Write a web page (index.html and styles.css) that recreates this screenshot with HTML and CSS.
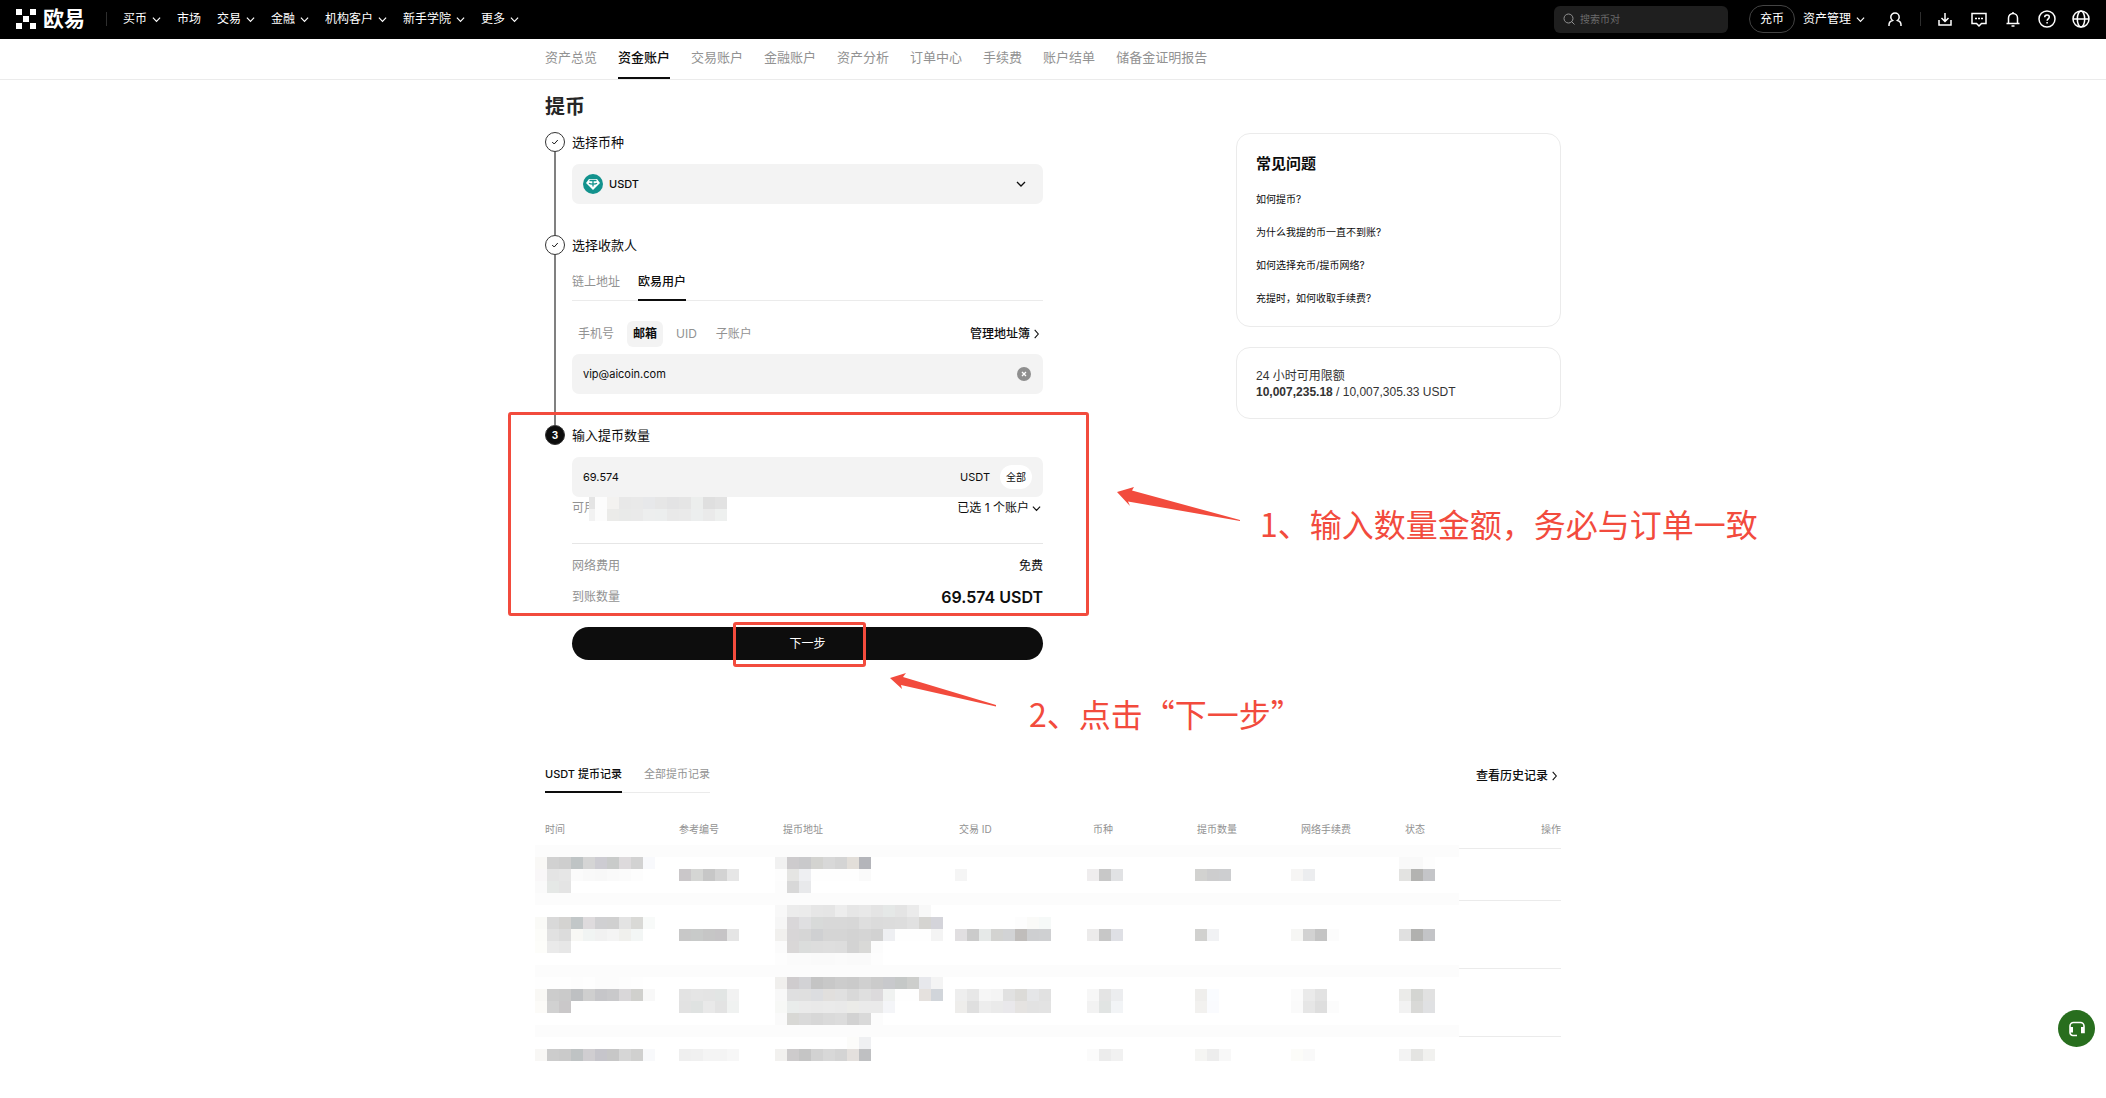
FILE: index.html
```html
<!DOCTYPE html>
<html lang="zh-CN">
<head>
<meta charset="UTF-8">
<meta name="viewport" content="width=device-width, initial-scale=1.0">
<title>提币</title>
<link rel="stylesheet" href="styles.css">
</head>
<body>

<!-- Shared icons -->
<svg class="sprite" aria-hidden="true">
  <symbol id="chevron-down" viewBox="0 0 10 10"><path d="M1 3l4 4 4-4" fill="none" stroke="currentColor" stroke-width="1.3"/></symbol>
  <symbol id="chevron-right" viewBox="0 0 10 10"><path d="M3 0.500l4 4.500-4 4.500" fill="none" stroke="currentColor" stroke-width="1.2"/></symbol>
  <symbol id="check" viewBox="0 0 10 10"><path d="M1.500 5l2.500 2.500 4.500-5" fill="none" stroke="currentColor" stroke-width="1.200"/></symbol>
</svg>

<header class="topbar">
  <a class="logo" href="#">
    <svg width="20" height="20" viewBox="0 0 20 20" fill="#fff"><path d="M0 0h6v6H0zM14 0h6v6h-6zM7 7h6v6H7zM0 14h6v6H0zM14 14h6v6h-6z"/></svg>
    <span>欧易</span>
  </a>
  <span class="divider"></span>
  <nav class="topnav">
    <button type="button">买币<svg><use href="#chevron-down"/></svg></button>
    <a href="#">市场</a>
    <button type="button">交易<svg><use href="#chevron-down"/></svg></button>
    <button type="button">金融<svg><use href="#chevron-down"/></svg></button>
    <button type="button">机构客户<svg><use href="#chevron-down"/></svg></button>
    <button type="button">新手学院<svg><use href="#chevron-down"/></svg></button>
    <button type="button">更多<svg><use href="#chevron-down"/></svg></button>
  </nav>
  <label class="search">
    <svg width="12" height="12" viewBox="0 0 12 12" fill="none" stroke="#929292"><circle cx="5.500" cy="5.500" r="4.500"/><path d="M8.500 8.500l3 3"/></svg>
    <input type="search" placeholder="搜索币对" aria-label="搜索币对">
  </label>
  <a class="deposit" href="#">充币</a>
  <button type="button" class="assets">资产管理<svg><use href="#chevron-down"/></svg></button>
  <button type="button" class="icon-btn user" aria-label="用户">
    <svg viewBox="0 0 18 18"><path d="M3 16v-1c0-2.500 1.500-4 3.500-4.500C5.300 9.600 4.800 8.500 4.800 7.200 4.800 4.900 6.600 3 9 3s4.200 1.900 4.200 4.200c0 1.300-.5 2.400-1.700 3.300 2 .5 3.500 2 3.500 4.500v1"/></svg>
  </button>
  <span class="divider"></span>
  <div class="icons">
    <button type="button" class="icon-btn" aria-label="下载">
      <svg viewBox="0 0 18 18"><path d="M3 10v5h12v-5M9 3v8M5.500 8L9 11.500 12.500 8"/></svg>
    </button>
    <button type="button" class="icon-btn" aria-label="消息">
      <svg viewBox="0 0 18 18"><path d="M2 3.500h14v10h-4.500L9 16l-2.500-2.500H2zM5 8.500h2M8 8.500h2M11 8.500h2"/></svg>
    </button>
    <button type="button" class="icon-btn" aria-label="通知">
      <svg viewBox="0 0 18 18"><path d="M2.500 13.500h13M4.500 13V8a4.500 4.500 0 0 1 9 0v5M9 3.500V2M7.500 16h3"/></svg>
    </button>
    <button type="button" class="icon-btn" aria-label="帮助">
      <svg viewBox="0 0 18 18"><circle cx="9" cy="9" r="8"/><path d="M6.700 7.300c0-1.500 1-2.300 2.300-2.300s2.300.9 2.300 2.100c0 1.700-2.200 1.800-2.200 3.600M9.100 12v1.500"/></svg>
    </button>
    <button type="button" class="icon-btn" aria-label="语言">
      <svg viewBox="0 0 18 18"><circle cx="9" cy="9" r="8"/><ellipse cx="9" cy="9" rx="3.700" ry="8"/><path d="M1 9h16"/></svg>
    </button>
  </div>
</header>

<nav class="subnav">
  <div class="container">
    <a href="#">资产总览</a>
    <a href="#" class="active">资金账户</a>
    <a href="#">交易账户</a>
    <a href="#">金融账户</a>
    <a href="#">资产分析</a>
    <a href="#">订单中心</a>
    <a href="#">手续费</a>
    <a href="#">账户结单</a>
    <a href="#">储备金证明报告</a>
  </div>
</nav>

<main class="container page">
  <h1>提币</h1>

  <div class="columns">
    <form class="steps">
      <section class="step">
        <h2><span class="dot"><svg><use href="#check"/></svg></span><label for="coin">选择币种</label></h2>
        <div class="field coin">
          <svg width="20" height="20" viewBox="0 0 20 20"><circle cx="10" cy="10" r="10" fill="#12928d"/><path d="M6 5h8l3 4-7 7-7-7z" fill="#fff"/><path d="M6.500 6.500h7M10 6.500v6M6 9.200c1.500 1.200 6.500 1.200 8 0" fill="none" stroke="#12928d" stroke-width="1.300"/></svg>
          <select id="coin"><option>USDT</option></select>
          <svg class="arrow"><use href="#chevron-down"/></svg>
        </div>
      </section>

      <section class="step">
        <h2><span class="dot"><svg><use href="#check"/></svg></span><label for="recipient">选择收款人</label></h2>
        <div class="tabs">
          <button type="button">链上地址</button>
          <button type="button" class="active">欧易用户</button>
        </div>
        <div class="methods">
          <button type="button">手机号</button>
          <button type="button" class="active">邮箱</button>
          <button type="button">UID</button>
          <button type="button">子账户</button>
          <a class="more" href="#">管理地址簿<svg><use href="#chevron-right"/></svg></a>
        </div>
        <div class="field">
          <input type="text" id="recipient" value="vip@aicoin.com">
          <button type="button" class="clear" aria-label="清除">
            <svg width="14" height="14" viewBox="0 0 14 14"><circle cx="7" cy="7" r="7" fill="#8f8f8f"/><path d="M5 5l4 4M9 5l-4 4" stroke="#fff" stroke-width="1.300"/></svg>
          </button>
        </div>
      </section>

      <section class="step">
        <h2><span class="dot current">3</span><label for="amount">输入提币数量</label></h2>
        <div class="field amount">
          <input type="text" id="amount" value="69.574">
          <span>USDT</span>
          <button type="button" class="all">全部</button>
        </div>
        <div class="available">
          <span class="muted">可用</span>
          <svg id="balanceMosaic" class="balance" viewBox="6 0 138 24"></svg>
          <button type="button">已选 1 个账户<svg><use href="#chevron-down"/></svg></button>
        </div>
        <dl class="summary">
          <div><dt>网络费用</dt><dd>免费</dd></div>
          <div><dt>到账数量</dt><dd class="total">69.574 USDT</dd></div>
        </dl>
        <button type="button" class="next">下一步</button>
      </section>
    </form>

    <aside>
      <section class="card faq">
        <h2>常见问题</h2>
        <ul>
          <li><a href="#">如何提币?</a></li>
          <li><a href="#">为什么我提的币一直不到账?</a></li>
          <li><a href="#">如何选择充币/提币网络?</a></li>
          <li><a href="#">充提时，如何收取手续费?</a></li>
        </ul>
      </section>
      <section class="card limit">
        <p>24 小时可用限额</p>
        <p><strong>10,007,235.18</strong> / 10,007,305.33 USDT</p>
      </section>
    </aside>
  </div>

  <section class="records">
    <div class="records-head">
      <div class="tabs">
        <button type="button" class="active">USDT 提币记录</button>
        <button type="button">全部提币记录</button>
      </div>
      <a class="more" href="#">查看历史记录<svg><use href="#chevron-right"/></svg></a>
    </div>
    <div class="table-wrap">
      <table>
        <thead>
          <tr>
            <th class="w-time">时间</th>
            <th class="w-small">参考编号</th>
            <th class="w-address">提币地址</th>
            <th class="w-time">交易 ID</th>
            <th class="w-small">币种</th>
            <th class="w-small">提币数量</th>
            <th class="w-small">网络手续费</th>
            <th class="w-small">状态</th>
            <th>操作</th>
          </tr>
        </thead>
        <tbody>
          <tr class="short"><td></td><td></td><td></td><td></td><td></td><td></td><td></td><td></td><td></td></tr>
          <tr><td></td><td></td><td></td><td></td><td></td><td></td><td></td><td></td><td></td></tr>
          <tr><td></td><td></td><td></td><td></td><td></td><td></td><td></td><td></td><td></td></tr>
          <tr class="short last"><td></td><td></td><td></td><td></td><td></td><td></td><td></td><td></td><td></td></tr>
        </tbody>
      </table>
      <svg id="recordsMosaic" class="mosaic" viewBox="0 0 924 216"></svg>
    </div>
  </section>

  <!-- Guide marks over the form -->
  <div class="mark mark-amount"></div>
  <div class="mark mark-next"></div>
  <svg class="pointer pointer-amount" width="124" height="34" viewBox="0 0 124 34"><path d="M0 5L17 0l-2 3.500L123 33v1L11 14.500l2 4.500z"/></svg>
  <svg class="pointer pointer-next" width="108" height="34" viewBox="0 0 108 34"><path d="M0 5L16 0l-3 4L106 32v1.500L11 12l1 4z"/></svg>
  <p class="note note-amount">1、输入数量金额，务必与订单一致</p>
  <p class="note note-next">2、点击“下一步”</p>
</main>

<button type="button" class="support" aria-label="在线客服">
  <svg width="18" height="18" viewBox="0 0 18 18" fill="none" stroke="#fff" stroke-width="1.600"><path d="M9 15.500H5a3 3 0 0 1-3-3V6a3.500 3.500 0 0 1 3.500-3.500h7A3.500 3.500 0 0 1 16 6v6.500h-3"/><path d="M3.500 7v5.500M14.500 7v5.500" stroke-width="3"/></svg>
</button>

<script src="script.js"></script>
</body>
</html>
```
FILE: styles.css
```css
* {
  box-sizing: border-box;
}
body {
  font-family: Inter, "Noto Sans CJK SC", sans-serif;
  font-size: 12px;
  line-height: 20px;
  margin: 0;
  background-color: #fff;
  color: #0d0d0d;
}
h1, h2, p, ul, dl, dd {
  margin: 0;
  padding: 0;
}
a {
  color: inherit;
  text-decoration: none;
}
button, input, select {
  font: inherit;
  color: inherit;
  background: none;
  border: none;
  padding: 0;
  margin: 0;
}
button {
  cursor: pointer;
  white-space: nowrap;
}
input, select {
  outline: none;
  min-width: 0;
}
svg {
  display: block;
  flex: none;
}
.sprite {
  display: none;
}
.container {
  max-width: 1016px;
  margin: 0 auto;
}

/* Top bar */
.topbar {
  display: flex;
  align-items: center;
  height: 39px;
  padding: 0 16px 1px;
  background: #000;
  color: #fff;
}
.logo {
  display: flex;
  align-items: center;
  gap: 7px;
  font-size: 21px;
  font-weight: bold;
}
.divider {
  width: 1px;
  height: 14px;
  background: #2e2e2e;
}
.logo + .divider {
  margin: 0 16px 0 21px;
}
.topnav {
  display: flex;
  gap: 16px;
  margin-right: auto;
}
.topnav button, .assets {
  display: flex;
  align-items: center;
  gap: 5px;
}
.topnav svg, .assets svg {
  width: 9px;
  height: 9px;
}
.search {
  display: flex;
  align-items: center;
  gap: 5px;
  width: 174px;
  height: 27px;
  padding: 0 9px;
  background: #1f1f1f;
  border-radius: 6px;
  font-size: 10px;
}
.search input {
  flex: 1;
}
.search input::placeholder {
  color: #6b6b6b;
}
.deposit {
  margin: 0 8px 0 21px;
  padding: 3px 10px;
  border: 1px solid #444;
  border-radius: 14px;
}
.icon-btn svg {
  width: 18px;
  height: 18px;
  fill: none;
  stroke: #fff;
  stroke-width: 1.5;
}
.user {
  margin: 0 16px 0 21px;
}
.icons {
  display: flex;
  gap: 16px;
  margin-left: 15px;
}

/* Account tabs */
.subnav {
  border-bottom: 1px solid #ebebeb;
  font-size: 13px;
  color: #929292;
}
.subnav .container {
  display: flex;
  gap: 21px;
}
.subnav a {
  height: 40px;
  line-height: 36px;
}
.subnav a.active {
  color: #0d0d0d;
  font-weight: 500;
  border-bottom: 2px solid #0d0d0d;
}

/* Page */
.page {
  position: relative;
  padding-top: 15px;
}
h1 {
  font-size: 20px;
  line-height: 24px;
  color: #262626;
}
.columns {
  display: flex;
  justify-content: space-between;
  align-items: flex-start;
  margin-top: 13px;
}
.steps {
  width: 498px;
}
.step {
  position: relative;
  padding: 0 0 31px 27px;
}
.step:last-child {
  padding-bottom: 0;
}
.step:not(:last-child)::before {
  content: "";
  position: absolute;
  left: 9px;
  top: 20px;
  bottom: 0;
  width: 2px;
  background: #808080;
}
.step h2 {
  display: flex;
  gap: 7px;
  margin-left: -27px;
  font-size: 13px;
  font-weight: normal;
}
.dot {
  display: flex;
  align-items: center;
  justify-content: center;
  width: 20px;
  height: 20px;
  border: 1px solid #333;
  border-radius: 50%;
}
.dot svg {
  width: 8px;
  height: 8px;
}
.dot.current {
  background: #0d0d0d;
  color: #fff;
  font-size: 10px;
  font-weight: bold;
}
.field {
  display: flex;
  align-items: center;
  height: 40px;
  margin-top: 12px;
  padding: 0 11px;
  background: #f3f3f3;
  border-radius: 7px;
}
.field input, .field select {
  flex: 1;
}
.field input {
  font-size: 11px;
}
.coin {
  gap: 6px;
}
.coin select {
  appearance: none;
  font-size: 11px;
  font-weight: 500;
}
.coin .arrow {
  width: 10px;
  height: 10px;
  margin-right: 6px;
}
.tabs {
  display: flex;
  gap: 22px;
  height: 36px;
  border-bottom: 1px solid #ebebeb;
  color: #929292;
}
.step .tabs {
  gap: 18px;
  margin-top: 10px;
}
.tabs button {
  height: 36px;
  border-bottom: 2px solid transparent;
}
.tabs .active {
  color: #0d0d0d;
  font-weight: 500;
  border-color: #0d0d0d;
}
.methods {
  display: flex;
  align-items: center;
  gap: 7px;
  height: 26px;
  margin-top: 20px;
  color: #929292;
}
.methods button {
  height: 26px;
  padding: 0 6px;
}
.methods .active {
  background: #f3f3f3;
  border-radius: 6px;
  color: #0d0d0d;
  font-weight: bold;
}
.methods + .field {
  margin-top: 7px;
}
.more {
  display: flex;
  align-items: center;
  gap: 2px;
  margin-left: auto;
  padding-right: 2px;
  color: #0d0d0d;
  font-weight: 500;
}
.more svg {
  width: 9px;
  height: 10px;
}
.amount span {
  margin-right: 10px;
  font-size: 11px;
}
.amount .all {
  height: 24px;
  padding: 0 6px;
  background: #fff;
  border-radius: 12px;
  font-size: 10px;
}
.clear {
  margin-right: 1px;
}
.available {
  position: relative;
  display: flex;
  justify-content: space-between;
  height: 22px;
  line-height: 22px;
}
.available button {
  display: flex;
  align-items: center;
  gap: 3px;
  padding-right: 2px;
}
.available button svg {
  width: 9px;
  height: 9px;
}
.muted, .summary dt {
  color: #929292;
}
.balance {
  position: absolute;
  left: 17px;
  top: 0;
  width: 138px;
  height: 24px;
  background: #fff;
}
.summary {
  margin-top: 24px;
  padding-top: 12px;
  border-top: 1px solid #e6e6e6;
}
.summary div {
  display: flex;
  justify-content: space-between;
  margin-bottom: 11px;
}
.summary .total {
  font-size: 16px;
  font-weight: 600;
}
.next {
  display: block;
  width: 100%;
  height: 33px;
  margin-top: 20px;
  background: #0d0d0d;
  border-radius: 17px;
  color: #fff;
}

/* Side cards */
aside {
  width: 325px;
  margin-top: 1px;
}
.card {
  padding: 20px 19px 18px;
  border: 1px solid #ebebeb;
  border-radius: 14px;
}
.faq h2 {
  font-size: 15px;
}
.faq ul {
  list-style: none;
  margin-top: 15px;
  font-size: 10px;
}
.faq li + li {
  margin-top: 13px;
}
.limit {
  margin-top: 20px;
  font-family: "Liberation Sans", "Noto Sans CJK SC", sans-serif;
  line-height: 16px;
  color: #333;
}

/* Records */
.records {
  margin-top: 97px;
}
.records-head {
  display: flex;
  align-items: center;
}
.records .tabs {
  font-size: 11px;
}
.records .more {
  padding-top: 2px;
}
table {
  width: 100%;
  table-layout: fixed;
  border-collapse: collapse;
  font-size: 10px;
}
.table-wrap {
  position: relative;
  margin-top: 17px;
}
th {
  height: 38px;
  padding: 0;
  font-weight: normal;
  text-align: left;
  color: #929292;
}
th:last-child {
  text-align: right;
}
tr {
  border-bottom: 1px solid #ebebeb;
}
tr.last {
  border-bottom: none;
}
td {
  height: 68px;
}
.short td {
  height: 52px;
}
.w-time {
  width: 134px;
}
.w-small {
  width: 104px;
}
.w-address {
  width: 176px;
}
.mosaic {
  position: absolute;
  left: -10px;
  top: 35px;
  width: 924px;
  height: 216px;
}

/* Guide marks */
.mark {
  position: absolute;
  border: 3px solid #f24b3d;
  border-radius: 3px;
}
.mark-amount {
  left: -37px;
  top: 332px;
  width: 581px;
  height: 204px;
}
.mark-next {
  left: 188px;
  top: 542px;
  width: 133px;
  height: 45px;
}
.pointer {
  position: absolute;
  fill: #f24b3d;
}
.pointer-amount {
  left: 572px;
  top: 407px;
}
.pointer-next {
  left: 345px;
  top: 593px;
}
.note {
  position: absolute;
  font-family: "Noto Sans CJK SC", sans-serif;
  font-size: 32px;
  line-height: 40px;
  color: #f24b3d;
  white-space: nowrap;
}
.note-amount {
  left: 715px;
  top: 423px;
}
.note-next {
  left: 484px;
  top: 613px;
}

/* Support button */
.support {
  position: fixed;
  right: 11px;
  bottom: 51px;
  display: flex;
  align-items: center;
  justify-content: center;
  width: 37px;
  height: 37px;
  background: #286e1e;
  border-radius: 50%;
}
```
FILE: script.js
```js
const CELL = 12;

// Each run is [row, column, colors]; a two-digit color is a grey
const balance = [
  [0, 0, 'e4 fc f3f2f0 e8 e9 e7e8ea e6 e3e3e4 e5 eceeed df e2'],
  [1, 0, 'f2 fc ebebe9 e9eae9 ea edeeee eceeee e9 ea eceeee ea eef0ef']
];

const band = Array(77).fill('fc').join(' ');
const records = [
  [0, 0, band], [4, 0, band], [10, 0, band], [15, 0, band],

  [1, 0, 'f9f8f6 d1 ce bfc4c5 d5 cdccd2 c9cbca dddadc d2 f8f9fc'],
  [2, 0, 'f9f7f8 e4 e6 fb f9 f8 fa fb fd'],
  [3, 0, 'fa e5e8e6 e4'],
  [2, 12, 'cac7c9 d5d6d4 c7 d3 e6'],
  [1, 20, 'f1 cdcbcd c9c9cb d3d3d0 d8 d4 e2ded9 b4b5ba'],
  [2, 20, 'fd e5e5e3 eeeff2 fe fe fe fe fa'],
  [3, 20, 'fc d8 e8e9eb'],
  [2, 35, 'f5'],
  [2, 46, 'efedee c8 e1e2e4'],
  [2, 55, 'd2d2d0 cdcdce cdced0'],
  [2, 63, 'f6f5f4 ecedef'],
  [1, 72, 'f9 f9 fd'],
  [2, 72, 'e3e3e1 b3b3b1 c4c5c8'],

  [6, 0, 'fafaf7 d9 d4d3d1 c2c7c8 dedbdd d0d0d2 d0 e3 d9d9d6 f8faf9'],
  [7, 0, 'fcfcf9 e1 dc f8f8f5 f1f4f3 f1 f4 f0f0ed f3f6f5'],
  [8, 0, 'fdfdfa ea e7'],
  [7, 12, 'c8 c8cac9 c6 c6c4c6 e5'],
  [5, 20, 'f8 ec eb e6 e5 ed e6 e8 e4 e5e8e7 e4 eb f8'],
  [6, 20, 'f6 d9d7d9 dfdfe1 d8dad9 d8 d8 d7 de db dc dd e1 d5d4d1 d4d4da'],
  [7, 20, 'f1f0ee d8d6d7 d6 cfd0d2 d5 d5 d3 d5 d2 eeeff2 fe fe fe f4'],
  [8, 20, 'fb d9d7d7 dbdddc dd de dd d3 d9d9d7 fc'],
  [9, 20, 'fd fb fb fa fa fb fa fa fd'],
  [6, 40, 'fd fafaf8 f6f9f8'],
  [7, 35, 'e1dfe1 cb e6e9e8 d3d3d1 d2d3d5 c0bdbb cecfd1 cfd0d2'],
  [7, 46, 'ecebeb c7 dfe0e5'],
  [7, 55, 'd1d1cf f1f2f4'],
  [7, 63, 'f6f6f4 d2 c4 fc'],
  [7, 72, 'e0 b1b1af c3c4c7'],

  [11, 0, 'fe fe fe fd fe fc fc fd fe'],
  [12, 0, 'f9f8f5 cc ca bec0c2 cf c6c6c9 c9c9cb d9d7d9 d0d0cd f8'],
  [13, 0, 'fcfbf8 d1 cac8c9'],
  [12, 12, 'e3 e5 e4 e2e5e4 f2'],
  [13, 12, 'e2 dfe2e1 e9 e3 f0f2f1'],
  [11, 20, 'f0efed cfccce d2d2d5 c4 c8 cc ca d0 cb c8c9cc c5c8c7 cdcecc e7e8ec f4'],
  [12, 20, 'f8 dfdfe0 df dcdde0 e1dfdd e0 d9 df dcdadc f0f2f1 fe fe e5e1de d1d5da'],
  [13, 20, 'f7f8f6 e9eceb ea e9 ea e9 ebebe8 ea ea f4f5f8'],
  [14, 20, 'fa d8d8d5 da d7 da dc d2 d9 fc'],
  [12, 35, 'ee e7 f6 f4 e1 dcdbd8 e5e6e8 e1'],
  [13, 35, 'eeedeb df ed ea e9e8eb e5e3e1 e2 e3'],
  [12, 46, 'f7 e4 ecedef'],
  [13, 46, 'f2 e1e4e3 f2f4f6'],
  [12, 55, 'efeeec fafcff'],
  [13, 55, 'f2f1ef fafbfe'],
  [12, 63, 'fb ea e2'],
  [13, 63, 'fa e6 de fc'],
  [12, 72, 'ebebe9 d4d5d2 e1'],
  [13, 72, 'f2 d9d9d7 e0e1e3'],

  [16, 26, 'fcfcfa eff0f2'],
  [17, 0, 'f8f7f5 cc ca bfc3c4 d0ced1 c6c5cb c7 d6 d0d0cf f8f9fb'],
  [17, 12, 'ef f0 f4 f4 f7'],
  [17, 20, 'f2f1ef cdcbcc c5 d2 d8 d4 e4e0dd bfc0c2'],
  [17, 46, 'fb ec f1'],
  [17, 55, 'f5f5f3 ed f8'],
  [17, 63, 'fcfcf9 f9'],
  [17, 72, 'f3 e4e4e2 f1f1ef']
];

function drawMosaic(id, runs) {
  const svg = document.getElementById(id);
  runs.forEach(([row, column, colors]) => {
    colors.split(' ').forEach((color, i) => {
      const rect = document.createElementNS('http://www.w3.org/2000/svg', 'rect');
      rect.setAttribute('x', (column + i) * CELL);
      rect.setAttribute('y', row * CELL);
      rect.setAttribute('width', CELL);
      rect.setAttribute('height', CELL);
      rect.setAttribute('fill', '#' + (color.length === 2 ? color.repeat(3) : color));
      svg.appendChild(rect);
    });
  });
}

drawMosaic('balanceMosaic', balance);
drawMosaic('recordsMosaic', records);
```
